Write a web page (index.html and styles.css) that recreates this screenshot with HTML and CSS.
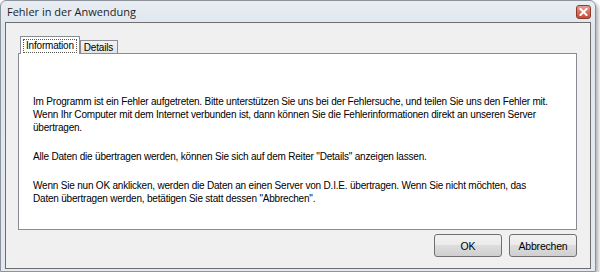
FILE: index.html
```html
<!DOCTYPE html>
<html lang="de">
<head>
    <meta charset="UTF-8">
    <title>Fehler in der Anwendung</title>
    <link rel="stylesheet" href="styles.css">
</head>
<body>
    <div class="window">
        <div class="titlebar">
            <span class="title">Fehler in der Anwendung</span>
            <span class="close-button">
                <svg width="9" height="8" viewBox="0 0 9 8">
                    <path d="M1.5 1 L7.5 7 M7.5 1 L1.5 7" stroke="#fff" stroke-width="2" stroke-linecap="square"/>
                </svg>
            </span>
        </div>
        <div class="client">
            <div class="tab-strip">
                <div class="tab active"><span class="focus">Information</span></div>
                <div class="tab">Details</div>
            </div>
            <div class="tab-panel">
                <p>Im Programm ist ein Fehler aufgetreten. Bitte unterstützen Sie uns bei der Fehlersuche, und teilen Sie uns den Fehler mit.<br>
                Wenn Ihr Computer mit dem Internet verbunden ist, dann können Sie die Fehlerinformationen direkt an unseren Server<br>
                übertragen.</p>
                <p>Alle Daten die übertragen werden, können Sie sich auf dem Reiter "Details" anzeigen lassen.</p>
                <p>Wenn Sie nun OK anklicken, werden die Daten an einen Server von D.I.E. übertragen. Wenn Sie nicht möchten, das<br>
                Daten übertragen werden, betätigen Sie statt dessen "Abbrechen".</p>
            </div>
            <div class="button-row">
                <button type="button" class="dialog-button">OK</button>
                <button type="button" class="dialog-button">Abbrechen</button>
            </div>
        </div>
    </div>
</body>
</html>
```

FILE: styles.css
```css
html, body {
    margin: 0;
    padding: 0;
    background-color: #fff;
    font-family: "Liberation Sans", Arial, sans-serif;
}

.window {
    width: 596px;
    height: 272px;
    box-sizing: border-box;
    display: flex;
    flex-direction: column;
    padding: 0 4px 2px 4px;
    border: 1px solid #8d939b;
    border-radius: 6px 6px 0 0;
    background: linear-gradient(#e8edf3, #dfe6ee 30px, #e4e9ef);
    box-shadow: 2px 3px 4px rgba(0, 0, 0, 0.35);
}

.titlebar {
    height: 21px;
    display: flex;
    align-items: center;
    justify-content: space-between;
    padding-left: 2px;
}

.title {
    font-family: "Open Sans", "Noto Sans", sans-serif;
    font-size: 11px;
    color: #1e1e1e;
}

.close-button {
    width: 15px;
    height: 14px;
    box-sizing: border-box;
    display: flex;
    align-items: center;
    justify-content: center;
    border: 1px solid #8c3a2c;
    border-radius: 3px;
    background: linear-gradient(#e9a194, #d66f5c 50%, #c54d37);
}

.client {
    flex-grow: 1;
    display: flex;
    flex-direction: column;
    padding: 13px 13px 0 12px;
    border: 1px solid #6e6e6e;
    background-color: #f0f0f0;
}

.tab-strip {
    display: flex;
    align-items: flex-end;
    padding-left: 2px;
    height: 17px;
}

.tab {
    height: 13px;
    box-sizing: border-box;
    padding: 0 4px 0 3px;
    border: 1px solid #898c95;
    border-bottom: none;
    background: linear-gradient(#f3f3f3, #e4e4e4);
    font-size: 10px;
    letter-spacing: -0.2px;
    line-height: 13px;
    color: #000;
}

.tab.active {
    position: relative;
    z-index: 1;
    height: 18px;
    margin-bottom: -1px;
    padding: 2px 2px 0 2px;
    background: #fff;
}

.focus {
    display: block;
    padding: 0 2px;
    border: 1px dotted #555;
    line-height: 12px;
}

.tab-panel {
    height: 177px;
    box-sizing: border-box;
    padding: 41px 0 0 14px;
    border: 1px solid #898c95;
    background-color: #fff;
    font-size: 10px;
    letter-spacing: -0.2px;
    line-height: 13px;
    color: #000;
    white-space: nowrap;
}

.tab-panel p {
    margin: 0 0 16px 0;
}

.button-row {
    display: flex;
    justify-content: flex-end;
    gap: 7px;
    margin-top: 4px;
}

.dialog-button {
    width: 68px;
    height: 23px;
    padding: 0;
    border: 1px solid #707070;
    border-radius: 3px;
    background: linear-gradient(#f2f2f2, #ebebeb 45%, #dddddd 50%, #cfcfcf);
    font-family: "Liberation Sans", Arial, sans-serif;
    font-size: 10.5px;
    letter-spacing: -0.2px;
    color: #000;
}
```
